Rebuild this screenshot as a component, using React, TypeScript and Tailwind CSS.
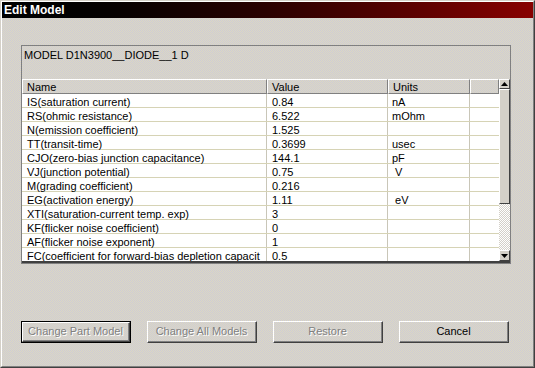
import React from 'react'

const rows = [
  { name: 'IS(saturation current)', value: '0.84', units: 'nA' },
  { name: 'RS(ohmic resistance)', value: '6.522', units: 'mOhm' },
  { name: 'N(emission coefficient)', value: '1.525', units: '' },
  { name: 'TT(transit-time)', value: '0.3699', units: 'usec' },
  { name: 'CJO(zero-bias junction capacitance)', value: '144.1', units: 'pF' },
  { name: 'VJ(junction potential)', value: '0.75', units: ' V' },
  { name: 'M(grading coefficient)', value: '0.216', units: '' },
  { name: 'EG(activation energy)', value: '1.11', units: ' eV' },
  { name: 'XTI(saturation-current temp. exp)', value: '3', units: '' },
  { name: 'KF(flicker noise coefficient)', value: '0', units: '' },
  { name: 'AF(flicker noise exponent)', value: '1', units: '' },
  { name: 'FC(coefficient for forward-bias depletion capacit', value: '0.5', units: '' },
]

const face =
  'bg-[repeating-conic-gradient(#dcd9c2_0%_25%,#cecbd6_0%_50%)] bg-[length:2px_2px]'

function HeaderCell({ label, w }: { label: string; w: string }) {
  return (
    <div
      className={`${w} h-[15px] shrink-0 border-t border-l border-t-white border-l-white border-r border-b border-r-[#808080] border-b-[#808080] pl-[4px] leading-[14px] overflow-hidden whitespace-nowrap`}
    >
      {label}
    </div>
  )
}

function Button({ label, disabled, isDefault }: { label: string; disabled?: boolean; isDefault?: boolean }) {
  return (
    <div className={`w-[110px] h-[22px] ${isDefault ? 'border border-black' : ''}`}>
      <div className="w-full h-full border-t border-l border-t-white border-l-white border-r border-b border-r-[#404040] border-b-[#404040]">
        <div
          className={`w-full h-full border-r border-b border-r-[#808080] border-b-[#808080] flex items-center justify-center ${
            disabled ? 'text-[#808080] [text-shadow:1px_1px_0_#ffffff]' : 'text-black'
          }`}
        >
          {label}
        </div>
      </div>
    </div>
  )
}

function Arrow({ up }: { up?: boolean }) {
  return (
    <svg width="7" height="4" viewBox="0 0 7 4">
      {up ? <path d="M3.5 0 L7 4 L0 4 Z" fill="#000" /> : <path d="M0 0 L7 0 L3.5 4 Z" fill="#000" />}
    </svg>
  )
}

export default function App() {
  return (
    <div
      className={`w-[535px] h-[368px] overflow-hidden border border-t-[#d4d0c8] border-l-[#d4d0c8] border-r-[#404040] border-b-[#404040] ${face} font-['Liberation_Sans',Arial,sans-serif] text-[11px] text-black`}
    >
      <div className="w-full h-full border border-t-white border-l-white border-r-[#808080] border-b-[#808080] flex flex-col">
        {/* title bar */}
        <div className="h-[16px] shrink-0 bg-linear-to-r from-black via-[#2a0000] to-[#880000] flex items-center pl-[2px]">
          <span className="text-white font-bold text-[12px] leading-none">Edit Model</span>
        </div>

        {/* model box */}
        <div className="mt-[27px] ml-[19px] w-[490px] h-[219px] border border-[#808080] flex flex-col">
          <div className="h-[33px] shrink-0 pl-[2px] pt-[3px] leading-[13px]">MODEL D1N3900__DIODE__1 D</div>

          <div className="flex-1 flex border-b-2 border-b-[#404040] overflow-hidden">
            {/* list */}
            <div className="w-[477px] flex flex-col">
              <div className="flex">
                <HeaderCell label="Name" w="w-[245px]" />
                <HeaderCell label="Value" w="w-[121px]" />
                <HeaderCell label="Units" w="w-[82px]" />
                <HeaderCell label="" w="w-[29px]" />
              </div>
              <div className="flex-1 bg-white overflow-hidden">
                {rows.map((r) => (
                  <div key={r.name} className="flex h-[14px] border-b border-b-[#d6d3b5]">
                    <div className="w-[245px] shrink-0 pl-[5px] leading-[16px] whitespace-nowrap overflow-x-clip border-r border-r-[#c9c6b8]">
                      {r.name}
                    </div>
                    <div className="w-[121px] shrink-0 pl-[5px] leading-[16px] border-r border-r-[#c9c6b8]">
                      {r.value}
                    </div>
                    <div className="w-[82px] shrink-0 pl-[4px] leading-[16px] whitespace-pre border-r border-r-[#c9c6b8]">
                      {r.units}
                    </div>
                    <div className="w-[29px] shrink-0" />
                  </div>
                ))}
              </div>
            </div>

            {/* scrollbar */}
            <div className="w-[11px] flex flex-col">
              <div className="h-[10px] shrink-0 bg-[#d4d0c8] border-t border-l border-t-white border-l-white border-r border-b border-r-[#404040] border-b-[#404040] flex items-center justify-center">
                <Arrow up />
              </div>
              <div className="h-[115px] shrink-0 bg-[#d4d0c8] border-t border-l border-t-white border-l-white border-r border-b border-r-[#404040] border-b-[#404040]" />
              <div className="flex-1 bg-[repeating-conic-gradient(#ffffff_0%_25%,#d4d0c8_0%_50%)] bg-[length:2px_2px]" />
              <div className="h-[11px] shrink-0 bg-[#d4d0c8] border-t border-l border-t-white border-l-white border-r border-b border-r-[#404040] border-b-[#404040] flex items-center justify-center">
                <Arrow />
              </div>
            </div>
          </div>
        </div>

        {/* buttons */}
        <div className="mt-[57px] ml-[19px] flex gap-[16px]">
          <Button label="Change Part Model" disabled isDefault />
          <Button label="Change All Models" disabled />
          <Button label="Restore" disabled />
          <Button label="Cancel" />
        </div>
      </div>
    </div>
  )
}
